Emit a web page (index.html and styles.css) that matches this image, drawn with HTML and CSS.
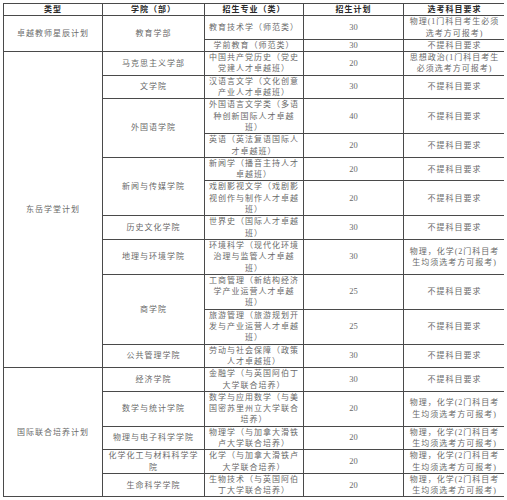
FILE: index.html
```html
<!DOCTYPE html>
<html lang="zh-CN">
<head>
<meta charset="utf-8">
<title>招生计划</title>
<link rel="stylesheet" href="styles.css">
</head>
<body>
<table class="plan">
  <colgroup>
    <col class="c1"><col class="c2"><col class="c3"><col class="c4"><col class="c5">
  </colgroup>
  <thead>
    <tr><th>类型</th><th>学院（部）</th><th>招生专业（类）</th><th>招生计划</th><th>选考科目要求</th></tr>
  </thead>
  <tbody>
    <tr><td rowspan="2">卓越教师星辰计划</td><td rowspan="2">教育学部</td><td>教育技术学（师范类）</td><td class="num">30</td><td>物理(1门科目考生必须<br>选考方可报考)</td></tr>
    <tr><td>学前教育（师范类）</td><td class="num">30</td><td>不提科目要求</td></tr>
    <tr><td rowspan="11">东岳学堂计划</td><td>马克思主义学部</td><td>中国共产党历史（党史<br>党建人才卓越班）</td><td class="num">20</td><td>思想政治(1门科目考生<br>必须选考方可报考)</td></tr>
    <tr><td>文学院</td><td>汉语言文学（文化创意<br>产业人才卓越班）</td><td class="num">30</td><td>不提科目要求</td></tr>
    <tr><td rowspan="2">外国语学院</td><td>外国语言文学类（多语<br>种创新国际人才卓越<br>班）</td><td class="num">40</td><td>不提科目要求</td></tr>
    <tr><td>英语（英法复语国际人<br>才卓越班）</td><td class="num">20</td><td>不提科目要求</td></tr>
    <tr><td rowspan="2">新闻与传媒学院</td><td>新闻学（播音主持人才<br>卓越班）</td><td class="num">20</td><td>不提科目要求</td></tr>
    <tr><td>戏剧影视文学（戏剧影<br>视创作与制作人才卓越<br>班）</td><td class="num">20</td><td>不提科目要求</td></tr>
    <tr><td>历史文化学院</td><td>世界史（国际人才卓越<br>班）</td><td class="num">30</td><td>不提科目要求</td></tr>
    <tr><td>地理与环境学院</td><td>环境科学（现代化环境<br>治理与监管人才卓越<br>班）</td><td class="num">30</td><td>物理，化学(2门科目考<br>生均须选考方可报考)</td></tr>
    <tr><td rowspan="2">商学院</td><td>工商管理（新结构经济<br>学产业运营人才卓越<br>班）</td><td class="num">25</td><td>不提科目要求</td></tr>
    <tr><td>旅游管理（旅游规划开<br>发与产业运营人才卓越<br>班）</td><td class="num">25</td><td>不提科目要求</td></tr>
    <tr><td>公共管理学院</td><td>劳动与社会保障（政策<br>人才卓越班）</td><td class="num">30</td><td>不提科目要求</td></tr>
    <tr><td rowspan="5">国际联合培养计划</td><td>经济学院</td><td>金融学（与英国阿伯丁<br>大学联合培养）</td><td class="num">30</td><td>不提科目要求</td></tr>
    <tr><td>数学与统计学院</td><td>数学与应用数学（与美<br>国密苏里州立大学联合<br>培养）</td><td class="num">20</td><td>物理，化学(2门科目考<br>生均须选考方可报考)</td></tr>
    <tr><td>物理与电子科学学院</td><td>物理学（与加拿大滑铁<br>卢大学联合培养）</td><td class="num">20</td><td>物理，化学(2门科目考<br>生均须选考方可报考)</td></tr>
    <tr><td>化学化工与材料科学学<br>院</td><td>化学（与加拿大滑铁卢<br>大学联合培养）</td><td class="num">20</td><td>物理，化学(2门科目考<br>生均须选考方可报考)</td></tr>
    <tr><td>生命科学学院</td><td>生物技术（与英国阿伯<br>丁大学联合培养）</td><td class="num">20</td><td>物理，化学(2门科目考<br>生均须选考方可报考)</td></tr>
  </tbody>
</table>
</body>
</html>
```
FILE: styles.css
```css
html, body {
  background: #ffffff;
}
body {
  margin: 3px;
  font-family: "Liberation Serif", "Noto Sans CJK SC", serif;
}
.plan {
  border-collapse: collapse;
  table-layout: fixed;
  width: 502px;
  border: 1px solid #3a3a3a;
}
.c1 { width: 99px; }
.c2 { width: 102px; }
.c3 { width: 99px; }
.c4 { width: 100px; }
.c5 { width: 102px; }
.plan th,
.plan td {
  border: 1px solid #4a4a4a;
  padding: 0 2px;
  text-align: center;
  vertical-align: middle;
  font-size: 8px;
  line-height: 11.3px;
  letter-spacing: 1px;
  color: #6a6a6a;
  font-weight: normal;
  white-space: nowrap;
}
.plan th {
  color: #2a2a2a;
  font-weight: bold;
}
.plan td.num {
  font-size: 8.5px;
  letter-spacing: 0;
}
```
